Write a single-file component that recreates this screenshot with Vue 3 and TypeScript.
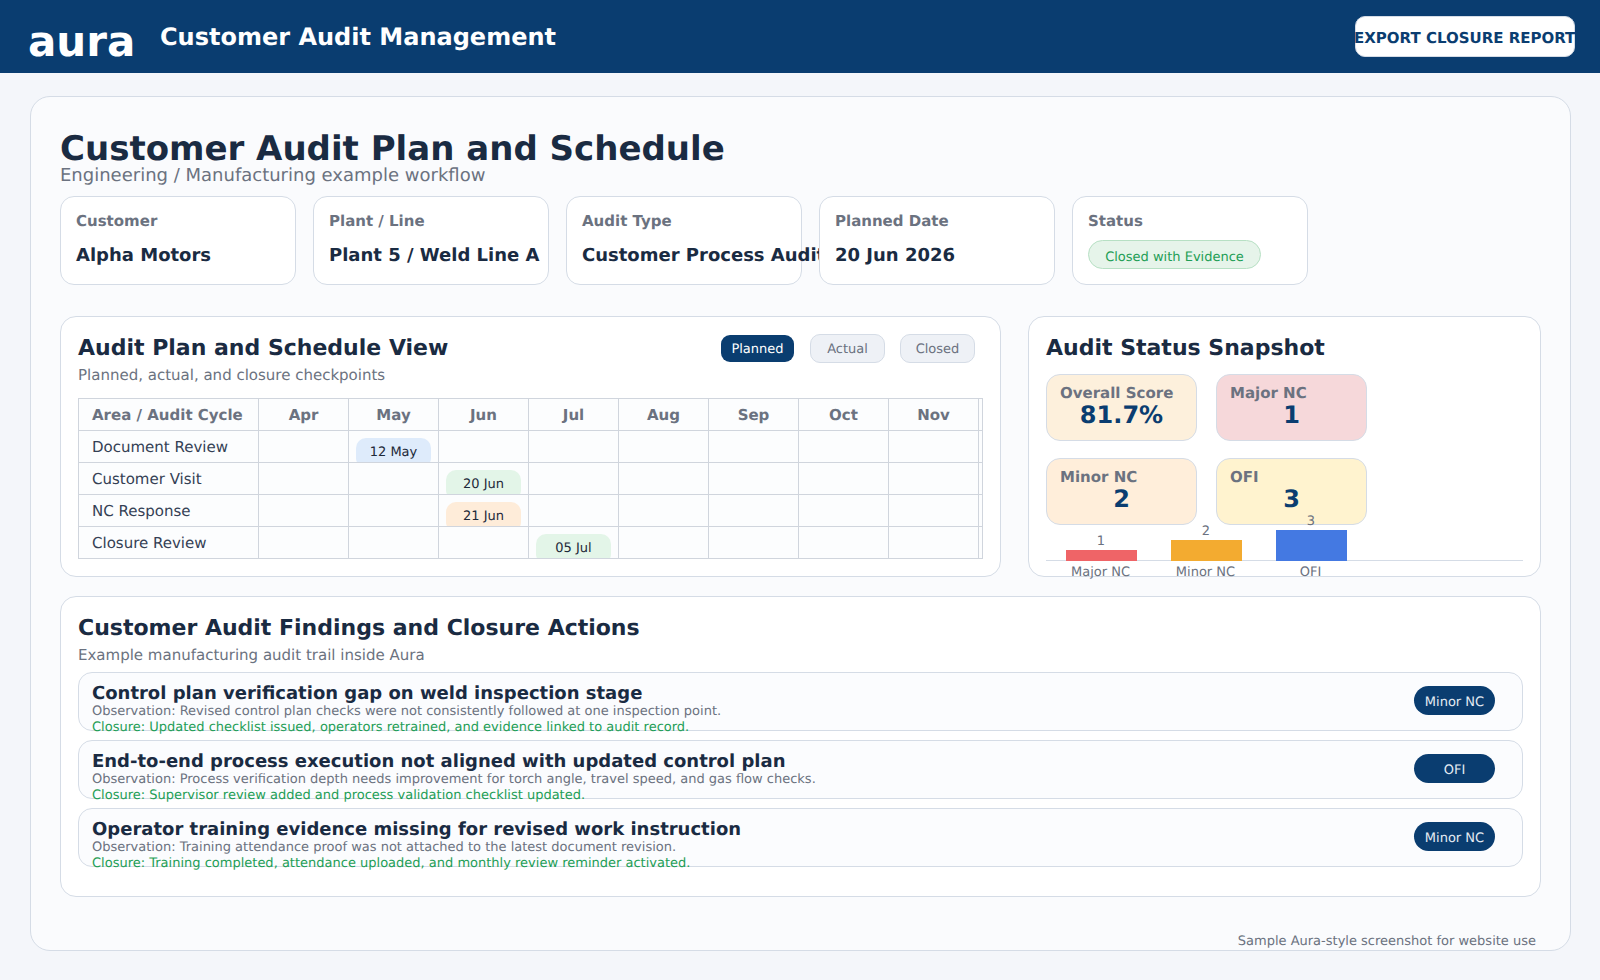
<script setup lang="ts">
interface Meta {
  label: string
  value: string
}

const metas: Meta[] = [
  { label: "Customer", value: "Alpha Motors" },
  { label: "Plant / Line", value: "Plant 5 / Weld Line A" },
  { label: "Audit Type", value: "Customer Process Audit" },
  { label: "Planned Date", value: "20 Jun 2026" },
]

const months = ["Apr", "May", "Jun", "Jul", "Aug", "Sep", "Oct", "Nov", "Dec"]

const schedule = [
  { area: "Document Review", month: "May", date: "12 May", tone: "blue" },
  { area: "Customer Visit", month: "Jun", date: "20 Jun", tone: "green" },
  { area: "NC Response", month: "Jun", date: "21 Jun", tone: "orange" },
  { area: "Closure Review", month: "Jul", date: "05 Jul", tone: "green" },
]

const tiles = [
  { label: "Overall Score", value: "81.7%", tone: "score" },
  { label: "Major NC", value: "1", tone: "major" },
  { label: "Minor NC", value: "2", tone: "minor" },
  { label: "OFI", value: "3", tone: "ofi" },
]

const bars = [
  { label: "Major NC", value: 1, color: "#ef6467" },
  { label: "Minor NC", value: 2, color: "#f3ab30" },
  { label: "OFI", value: 3, color: "#4479e2" },
]

const findings = [
  {
    title: "Control plan verification gap on weld inspection stage",
    observation: "Observation: Revised control plan checks were not consistently followed at one inspection point.",
    closure: "Closure: Updated checklist issued, operators retrained, and evidence linked to audit record.",
    tag: "Minor NC",
  },
  {
    title: "End-to-end process execution not aligned with updated control plan",
    observation: "Observation: Process verification depth needs improvement for torch angle, travel speed, and gas flow checks.",
    closure: "Closure: Supervisor review added and process validation checklist updated.",
    tag: "OFI",
  },
  {
    title: "Operator training evidence missing for revised work instruction",
    observation: "Observation: Training attendance proof was not attached to the latest document revision.",
    closure: "Closure: Training completed, attendance uploaded, and monthly review reminder activated.",
    tag: "Minor NC",
  },
]
</script>

<template>
  <header class="topbar">
    <div class="logo">aura</div>
    <div class="app-title">Customer Audit Management</div>
    <button class="export">EXPORT CLOSURE REPORT</button>
  </header>

  <main class="page">
    <section class="sheet">
      <h1>Customer Audit Plan and Schedule</h1>
      <p class="lead">Engineering / Manufacturing example workflow</p>

      <div class="metas">
        <div v-for="m in metas" :key="m.label" class="meta">
          <div class="meta-label">{{ m.label }}</div>
          <div class="meta-value">{{ m.value }}</div>
        </div>
        <div class="meta">
          <div class="meta-label">Status</div>
          <span class="status-pill">Closed with Evidence</span>
        </div>
      </div>

      <div class="columns">
        <section class="panel schedule">
          <div class="panel-head">
            <div>
              <h2>Audit Plan and Schedule View</h2>
              <p class="sub">Planned, actual, and closure checkpoints</p>
            </div>
            <div class="toggles">
              <span class="toggle active">Planned</span>
              <span class="toggle">Actual</span>
              <span class="toggle">Closed</span>
            </div>
          </div>
          <div class="table-wrap">
            <div class="table">
              <div class="cell head first">Area / Audit Cycle</div>
              <div v-for="mon in months" :key="mon" class="cell head">{{ mon }}</div>
              <template v-for="row in schedule" :key="row.area">
                <div class="cell first">{{ row.area }}</div>
                <div v-for="mon in months" :key="mon" class="cell">
                  <span v-if="mon === row.month" class="chip" :class="row.tone">{{ row.date }}</span>
                </div>
              </template>
            </div>
          </div>
        </section>

        <section class="panel snapshot">
          <h2>Audit Status Snapshot</h2>
          <div class="tiles">
            <div v-for="t in tiles" :key="t.label" class="tile" :class="t.tone">
              <div class="tile-label">{{ t.label }}</div>
              <div class="tile-value">{{ t.value }}</div>
            </div>
          </div>
          <div class="chart">
            <div v-for="b in bars" :key="b.label" class="bar-col">
              <span class="bar-value">{{ b.value }}</span>
              <div class="bar" :style="{ height: b.value * 10 + 1 + 'px', background: b.color }"></div>
              <span class="bar-label">{{ b.label }}</span>
            </div>
          </div>
        </section>
      </div>

      <section class="panel findings">
        <h2>Customer Audit Findings and Closure Actions</h2>
        <p class="sub">Example manufacturing audit trail inside Aura</p>
        <div class="finding-list">
          <div v-for="f in findings" :key="f.title" class="finding">
            <div class="finding-body">
              <div class="finding-title">{{ f.title }}</div>
              <div class="finding-obs">{{ f.observation }}</div>
              <div class="finding-closure">{{ f.closure }}</div>
            </div>
            <span class="tag">{{ f.tag }}</span>
          </div>
        </div>
      </section>

      <div class="footnote">Sample Aura-style screenshot for website use</div>
    </section>
  </main>
</template>

<style>
html,
body {
  margin: 0;
  background: #f4f6fa;
}
</style>

<style scoped>
* {
  box-sizing: border-box;
}
.topbar {
  height: 73px;
  background: #0a3d70;
  display: flex;
  align-items: center;
  padding: 0 25px 0 28px;
  color: #fff;
  font-family: "DejaVu Sans", sans-serif;
  text-rendering: geometricPrecision;
}
.logo {
  font-size: 42px;
  font-weight: 700;
  margin-top: 10px;
  width: 132px;
}
.app-title {
  font-size: 24px;
  font-weight: 700;
  flex: 1;
}
.export {
  width: 220px;
  height: 41px;
  padding: 3px 3px 0 0;
  border: 1px solid #d5dce6;
  border-radius: 10px;
  background: #fff;
  color: #0a3d70;
  font-family: inherit;
  font-size: 15px;
  font-weight: 700;
  white-space: nowrap;
  text-indent: -2px;
  overflow: visible;
  margin-top: -1px;
  text-rendering: geometricPrecision;
}
.page {
  padding: 23px 29px 30px 30px;
  font-family: "DejaVu Sans", sans-serif;
  color: #1a2b42;
  text-rendering: geometricPrecision;
}
.sheet {
  position: relative;
  height: 855px;
  padding: 31px 29px 0;
  background: #fafbfd;
  border: 1px solid #d5dce6;
  border-radius: 20px;
}
h1 {
  margin: 0;
  font-size: 34px;
  line-height: 42px;
  font-weight: 700;
}
.lead {
  margin: -4px 0 10px;
  font-size: 18px;
  line-height: 20px;
  color: #6b7280;
}
.metas {
  display: grid;
  grid-template-columns: repeat(5, 236px);
  gap: 17px;
  margin-bottom: 31px;
}
.meta {
  height: 89px;
  padding: 15px 15px 0;
  background: #fff;
  border: 1px solid #d5dce6;
  border-radius: 14px;
}
.meta-label {
  font-size: 15px;
  line-height: 18px;
  font-weight: 700;
  color: #6b7280;
  margin-bottom: 14px;
}
.meta-value {
  font-size: 18px;
  line-height: 23px;
  font-weight: 700;
  white-space: nowrap;
}
.status-pill {
  display: block;
  width: 173px;
  height: 29px;
  margin-top: -4px;
  border: 1px solid #b7e0c4;
  border-radius: 15px;
  background: #e6f4ea;
  color: #1e9e56;
  font-size: 13px;
  line-height: 33px;
  text-align: center;
}
.columns {
  display: flex;
  gap: 27px;
  margin-bottom: 19px;
}
.panel {
  background: #fff;
  border: 1px solid #d5dce6;
  border-radius: 16px;
  padding: 0 17px;
}
.schedule {
  width: 941px;
  height: 261px;
}
.snapshot {
  width: 513px;
  height: 261px;
}
.panel-head {
  display: flex;
  justify-content: space-between;
}
h2 {
  margin: 0;
  padding-top: 18px;
  font-size: 22px;
  line-height: 28px;
  font-weight: 700;
}
.sub {
  margin: 1px 0 0;
  font-size: 15px;
  line-height: 22px;
  color: #6b7280;
}
.toggles {
  display: flex;
  gap: 15px;
  padding: 17px 8px 0 0;
}
.toggle {
  width: 75px;
  height: 29px;
  border: 1px solid #d5dce6;
  border-radius: 10px;
  background: #eef1f6;
  color: #6b7280;
  font-size: 13px;
  line-height: 29px;
  text-align: center;
}
.toggle.active {
  border-color: transparent;
  background: #0a3d70;
  background-clip: padding-box;
  color: #fff;
}
.table-wrap {
  margin-top: 12px;
  width: 905px;
  height: 161px;
  overflow: hidden;
  border: 1px solid #d0d5dd;
  background: #fcfdfe;
}
.table {
  display: grid;
  grid-template-columns: 180px repeat(9, 90px);
  grid-auto-rows: 32px;
}
.cell {
  border-right: 1px solid #d0d5dd;
  border-bottom: 1px solid #d0d5dd;
  overflow: hidden;
  font-size: 15px;
  line-height: 31px;
  padding: 7px 7px 0;
  text-align: center;
}
.cell.first {
  padding: 0 13px;
  line-height: 33px;
  text-align: left;
  color: #344054;
}
.cell.head {
  padding: 0;
  font-weight: 700;
  line-height: 33px;
  color: #6b7280;
}
.cell.head.first {
  padding: 0 13px;
  color: #6b7280;
}
.chip {
  display: block;
  height: 30px;
  border-radius: 10px;
  font-size: 13px;
  line-height: 29px;
  color: #1d2939;
}
.chip.blue {
  background: #deebfb;
}
.chip.green {
  background: #e3f5e8;
}
.chip.orange {
  background: #feecd9;
}
.tiles {
  display: grid;
  grid-template-columns: repeat(2, 151px);
  gap: 17px 19px;
  margin-top: 11px;
}
.tile {
  height: 67px;
  padding: 9px 13px 0;
  border: 1px solid #d5dce6;
  border-radius: 14px;
}
.tile.score {
  background: #fdf0dc;
}
.tile.major {
  background: #f6d8da;
}
.tile.minor {
  background: #ffeeda;
}
.tile.ofi {
  background: #fff3cf;
}
.tile-label {
  font-size: 15px;
  line-height: 18px;
  font-weight: 700;
  color: #6b7280;
}
.tile-value {
  font-size: 24px;
  line-height: 26px;
  font-weight: 700;
  color: #0a3d70;
  text-align: center;
}
.chart {
  display: flex;
  align-items: flex-end;
  gap: 34px;
  height: 36px;
  padding-left: 20px;
  border-bottom: 1px solid #d5dce6;
}
.bar-col {
  position: relative;
  width: 71px;
  text-align: center;
  font-size: 13px;
  color: #6b7280;
}
.bar {
  width: 71px;
  margin-bottom: -1px;
}
.bar-value {
  position: absolute;
  left: 0;
  right: 1px;
  bottom: calc(100% + 1px);
  line-height: 14px;
}
.bar-label {
  position: absolute;
  left: -12px;
  right: -10px;
  top: 100%;
  margin-top: 5px;
  line-height: 16px;
}
.findings {
  height: 301px;
}
.finding-list {
  display: flex;
  flex-direction: column;
  gap: 9px;
  margin-top: 6px;
}
.finding {
  display: flex;
  align-items: flex-start;
  justify-content: space-between;
  height: 59px;
  padding: 0 27px 0 13px;
  background: #fbfcfe;
  border: 1px solid #d5dce6;
  border-radius: 14px;
}
.finding-body {
  padding-top: 11px;
}
.finding-title {
  font-size: 18px;
  line-height: 20px;
  font-weight: 700;
}
.finding-obs,
.finding-closure {
  font-size: 13px;
  line-height: 16px;
  color: #6b7280;
}
.finding-closure {
  color: #1e9e56;
}
.tag {
  width: 81px;
  height: 29px;
  margin-top: 13px;
  border-radius: 15px;
  background: #0a3d70;
  color: #e4ebf3;
  font-size: 13px;
  line-height: 33px;
  text-align: center;
}
.footnote {
  position: absolute;
  right: 34px;
  bottom: 0;
  font-size: 13px;
  line-height: 16px;
  color: #6b7280;
}
</style>
